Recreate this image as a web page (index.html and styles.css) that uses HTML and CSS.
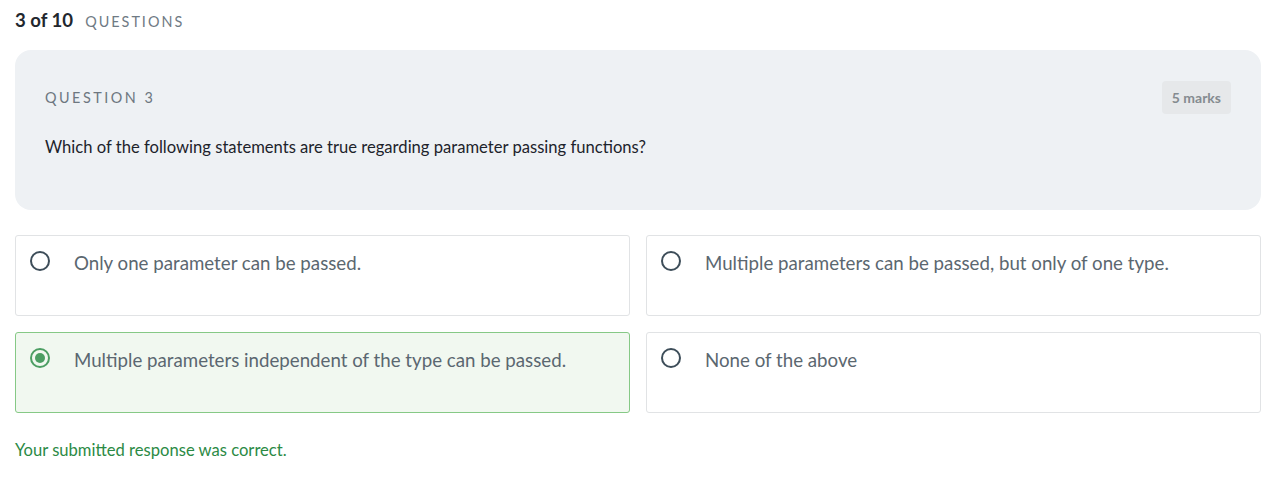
FILE: index.html
```html
<!DOCTYPE html>
<html>
<head>
<meta charset="utf-8">
<link rel="stylesheet" href="styles.css">
</head>
<body>
<div class="page">
  <div class="progress"><span class="count">3 of 10</span><span class="label">QUESTIONS</span></div>
  <div class="qcard">
    <div class="qhead">
      <span class="qnum">QUESTION 3</span>
      <span class="marks">5 marks</span>
    </div>
    <p class="qtext">Which of the following statements are true regarding parameter passing functions?</p>
  </div>
  <div class="options">
    <div class="option"><span class="radio"></span><span class="otext">Only one parameter can be passed.</span></div>
    <div class="option"><span class="radio"></span><span class="otext">Multiple parameters can be passed, but only of one type.</span></div>
    <div class="option selected"><span class="radio"><span class="dot"></span></span><span class="otext">Multiple parameters independent of the type can be passed.</span></div>
    <div class="option"><span class="radio"></span><span class="otext">None of the above</span></div>
  </div>
  <p class="result">Your submitted response was correct.</p>
</div>
</body>
</html>
```
FILE: styles.css
```css
* { box-sizing: border-box; }
html, body { margin: 0; padding: 0; background: #fff; }
body { font-family: "Lato", "Noto Sans", sans-serif; color: #1d232b; }
.page { padding: 9px 5px 0 15px; width: 1266px; }
.progress { display: flex; align-items: baseline; gap: 12px; height: 22px; }
.count { font-size: 18.6px; font-weight: 700; color: #22272e; }
.label { font-size: 14.4px; letter-spacing: 2px; color: #6f7a84; }
.qcard { margin-top: 19px; background: #eef1f4; border-radius: 16px; height: 160px; padding: 30px 30px 0 30px; }
.qhead { display: flex; justify-content: space-between; align-items: center; height: 34px; }
.qnum { font-size: 14.4px; letter-spacing: 2.5px; color: #6d7780; }
.marks { background: #e6e8ea; border-radius: 4px; padding: 0 10px; height: 33px; line-height: 33px; font-size: 14px; font-weight: 700; color: #858b90; }
.qtext { margin: 23px 0 0 0; font-size: 16.6px; color: #1d232b; }
.options { display: grid; grid-template-columns: 1fr 1fr; gap: 16px; margin-top: 25px; }
.option { height: 81px; border: 1px solid #e1e3e5; border-radius: 3px; display: flex; align-items: flex-start; padding: 15px 14px; background: #fff; }
.option.selected { background: #f1f8f0; border-color: #86c986; }
.radio { width: 20px; height: 20px; border: 2px solid #3d4d59; border-radius: 50%; flex: none; display: flex; align-items: center; justify-content: center; }
.selected .radio { border-color: #4c9e63; }
.dot { width: 10px; height: 10px; border-radius: 50%; background: #4c9e63; }
.otext { margin: 2px 0 0 24px; font-size: 18.7px; line-height: 20px; color: #5b6770; }
.result { margin: 27px 0 0 0; font-size: 16.6px; color: #2b8a45; }
```
